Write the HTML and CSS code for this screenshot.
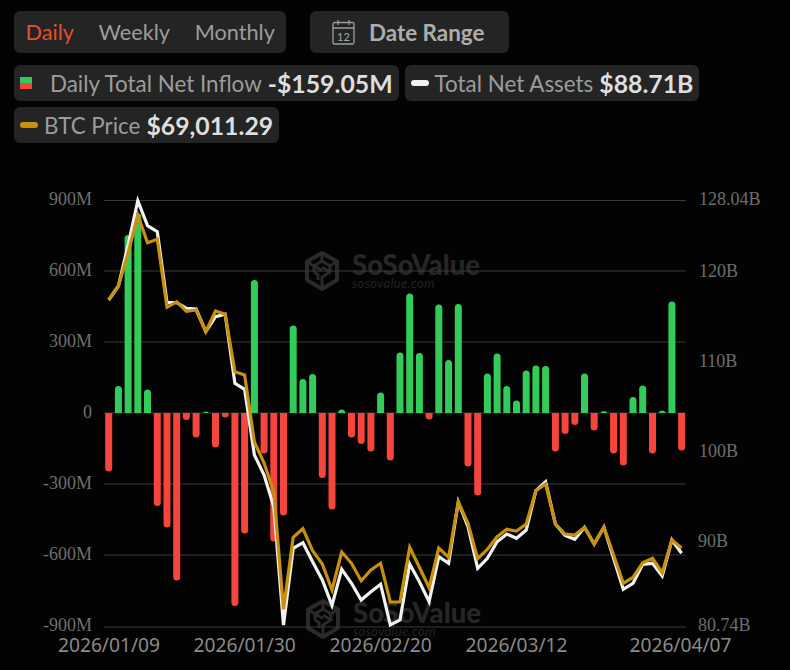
FILE: index.html
```html
<!DOCTYPE html>
<html lang="en">
<head>
<meta charset="utf-8">
<title>Daily Total Net Inflow</title>
<link rel="stylesheet" href="styles.css">
</head>
<body>
<main class="page">
  <div class="controls">
    <div class="panel tabs">
      <span class="tab active">Daily</span>
      <span class="tab">Weekly</span>
      <span class="tab">Monthly</span>
    </div>
    <div class="panel range">
      <svg class="cal" viewBox="0 0 23 26" aria-hidden="true">
        <rect x="1" y="3.5" width="21" height="21.5" rx="1.5"/>
        <path d="M1 9h21M6 1v5M17 1v5"/>
        <text x="11.5" y="21.5" class="cal-num">12</text>
      </svg>
      <span>Date Range</span>
    </div>
  </div>
  <div class="legend">
    <div class="chip chip-inflow">
      <span class="swatch"></span>
      <span class="label">Daily Total Net Inflow</span>
      <b class="value">-$159.05M</b>
    </div>
    <div class="chip">
      <span class="pill pill-white"></span>
      <span class="label">Total Net Assets</span>
      <b class="value">$88.71B</b>
    </div>
    <div class="chip">
      <span class="pill pill-gold"></span>
      <span class="label">BTC Price</span>
      <b class="value">$69,011.29</b>
    </div>
  </div>
  <svg class="chart" viewBox="0 180 790 490" aria-label="Daily total net inflow chart">
    <defs>
      <clipPath id="above"><rect x="100" y="180" width="590" height="233"/></clipPath>
      <clipPath id="below"><rect x="100" y="413" width="590" height="230"/></clipPath>
      <g id="mark">
        <path class="mark-hex" d="M17 2 32 10.5V29L17 38 2 29V10.5Z"/>
        <path class="mark-in" d="M17 2V10L9 15V21M9 15 17 19.5M17 10 25 15V21L17 26V38M25 21 17 16M9 21 13 23.5V29M2 10.5 9 15M32 10.5 25 15"/>
      </g>
    </defs>
    <g class="wm">
      <use href="#mark" x="305" y="251"/>
      <text class="wm-big" x="352" y="275">SoSoValue</text>
      <text class="wm-small" x="352" y="288">sosovalue.com</text>
      <use href="#mark" x="306" y="599"/>
      <text class="wm-big" x="353" y="623">SoSoValue</text>
      <text class="wm-small" x="353" y="636">sosovalue.com</text>
    </g>
    <path class="grid" d="M104 200.5H686M104 271H686M104 342H686M104 413H686M104 484H686M104 555H686M104 627H686"/>
    <g class="axis">
      <text class="end" x="92" y="205">900M</text>
      <text class="end" x="92" y="276">600M</text>
      <text class="end" x="92" y="347">300M</text>
      <text class="end" x="92" y="418">0</text>
      <text class="end" x="92" y="489">-300M</text>
      <text class="end" x="92" y="560">-600M</text>
      <text class="end" x="92" y="631">-900M</text>
      <text x="699" y="205">128.04B</text>
      <text x="699" y="277">120B</text>
      <text x="699" y="367">110B</text>
      <text x="699" y="457">100B</text>
      <text x="698" y="547">90B</text>
      <text x="698" y="631">80.74B</text>
    </g>
    <g class="dates">
      <text x="109" y="652">2026/01/09</text>
      <text x="244.6" y="652">2026/01/30</text>
      <text x="380.6" y="652">2026/02/20</text>
      <text x="516.5" y="652">2026/03/12</text>
      <text x="680.5" y="652">2026/04/07</text>
    </g>
    <path class="bars-up" clip-path="url(#above)" d="M118.4 420V389.5M128.1 420V238.5M137.8 420V217M147.5 420V393M205.8 420V415M254.4 420V283.5M293.2 420V329M302.9 420V382.5M312.6 420V377.5M341.7 420V413M380.6 420V396M400 420V356M409.7 420V297M419.4 420V356.5M438.8 420V308M448.6 420V363.5M458.3 420V307.5M487.4 420V377M497.1 420V357M506.8 420V389.5M516.5 420V404M526.2 420V374M535.9 420V369M545.6 420V369.5M584.5 420V377M603.9 420V414.5M633 420V400.5M642.7 420V389M662.2 420V414M671.9 420V305"/>
    <path class="bars-down" clip-path="url(#below)" d="M108.7 405V468M157.3 405V502.5M167 405V524M176.7 405V577M186.4 405V416.5M196.1 405V434M215.5 405V444M225.2 405V414M234.9 405V602.5M244.6 405V530M264.1 405V450M273.8 405V538M283.5 405V512M322.3 405V474.5M332 405V506M351.5 405V434M361.2 405V440.5M370.9 405V448M390.3 405V457M429.1 405V416M468 405V463M477.7 405V492M555.4 405V448M565.1 405V430.5M574.8 405V421.5M594.2 405V427M613.6 405V450M623.3 405V462M652.5 405V450M681.6 405V447"/>
    <polyline class="line-white" points="108.7,300 118.4,286 128.1,245 137.8,200.7 147.5,225.7 157.3,231.7 167,302.7 176.7,302.7 186.4,308.3 196.1,309 205.8,331.7 215.5,316.7 225.2,314.3 234.9,383.3 244.6,389.3 254.4,455 264.1,475 273.8,506.7 283.5,625 293.2,548.3 302.9,542.7 312.6,561.7 322.3,580 332,605.3 341.7,569.3 351.5,583.3 361.2,600 370.9,591.7 380.6,584.3 390.3,625 400,620 409.7,564 419.4,581.7 429.1,601.7 438.8,556.7 448.6,563.3 458.3,502 468,526.7 477.7,568.3 487.4,558.3 497.1,541.7 506.8,534 516.5,538.3 526.2,530 535.9,490.7 545.6,481.7 555.4,524 565.1,535.3 574.8,539.3 584.5,527.3 594.2,544 603.9,527.3 613.6,558.3 623.3,589.3 633,583.3 642.7,564.3 652.5,563.3 662.2,576 671.9,540 681.6,553.3"/>
    <polyline class="line-gold" points="108.7,300 118.4,286 128.1,253 137.8,215 147.5,242.7 157.3,239.3 167,307.3 176.7,301.7 186.4,311.3 196.1,310 205.8,331.7 215.5,311 225.2,314.3 234.9,371.7 244.6,375 254.4,442 264.1,463 273.8,492 283.5,609.3 293.2,537.3 302.9,528.7 312.6,550.7 322.3,564 332,590 341.7,552 351.5,563.3 361.2,580.7 370.9,570 380.6,563.3 390.3,602 400,602 409.7,547.3 419.4,567.3 429.1,587.7 438.8,548 448.6,557.3 458.3,502 468,523.3 477.7,558.7 487.4,549.3 497.1,536.7 506.8,529.3 516.5,531 526.2,524 535.9,490.7 545.6,484 555.4,524 565.1,534 574.8,535 584.5,527.3 594.2,544 603.9,527.3 613.6,555 623.3,583.3 633,577.3 642.7,562.7 652.5,558.3 662.2,572.7 671.9,540 681.6,548"/>
  </svg>
</main>
</body>
</html>
```
FILE: styles.css
```css
* { box-sizing: border-box; }
html, body { margin: 0; padding: 0; background: #030303; }
body { width: 790px; height: 670px; overflow: hidden; font-family: Lato, "Liberation Sans", sans-serif; }
.page { display: flex; flex-direction: column; padding-top: 11px; }
.controls { display: flex; gap: 24px; padding-left: 14px; }
.panel { height: 42px; background: #242424; border-radius: 6px; display: flex; align-items: center; font-size: 21.7px; color: #9c9c9c; }
.tabs { width: 272px; padding-left: 11.5px; gap: 24.6px; }
.tab.active { color: #e5502c; }
.range { width: 199px; padding-left: 22px; gap: 14px; font-size: 22.4px; font-weight: 700; color: #adadad; }
.cal { width: 23px; height: 26px; fill: none; stroke: #9c9c9c; stroke-width: 1.3; flex: none; }
.cal-num { font-family: Lato, sans-serif; font-size: 11px; font-weight: 400; fill: #a8a8a8; stroke: none; text-anchor: middle; }
.legend { display: flex; flex-wrap: wrap; gap: 6px; width: 720px; margin-top: 12px; padding-left: 14px; }
.chip { height: 36px; background: #242424; border-radius: 6px; display: flex; align-items: center; padding: 0 6px; gap: 6px; font-size: 22.4px; color: #9c9c9c; }
.value { font-size: 24.8px; font-weight: 700; color: #dedede; }
.swatch { width: 12px; height: 12px; margin-right: 12px; background: linear-gradient(#33cc5a 50%, #f6453c 50%); }
.pill { width: 18px; height: 6px; border-radius: 3px; }
.pill-white { background: #f2f2f2; }
.pill-gold { background: #c8900f; }
.chart { display: block; width: 790px; height: 490px; margin-top: 37px; flex: none; }
.grid { stroke: #3b3b3b; stroke-width: 1; fill: none; }
.axis text { font-family: "Liberation Serif", serif; font-size: 18px; fill: #6e6e6e; }
.axis .end { text-anchor: end; }
.dates text { font-family: "Noto Sans", sans-serif; font-size: 19.2px; fill: #8a8a8a; text-anchor: middle; }
.bars-up, .bars-down { fill: none; stroke-width: 7; stroke-linecap: round; }
.bars-up { stroke: #33cc5a; }
.bars-down { stroke: #f6453c; }
.line-white, .line-gold { fill: none; stroke-width: 3.2; stroke-linejoin: miter; }
.line-white { stroke: #f2f2f2; }
.line-gold { stroke: #c8900f; }
.wm-big { font-family: Lato, sans-serif; font-weight: 900; font-size: 27.5px; fill: #262626; }
.wm-small { font-family: Lato, sans-serif; font-style: italic; font-size: 13px; fill: #222; letter-spacing: .35px; }
.mark-hex { fill: none; stroke: #2a2a2a; stroke-width: 4; stroke-linejoin: round; }
.mark-in { fill: none; stroke: #2a2a2a; stroke-width: 3; }
```
